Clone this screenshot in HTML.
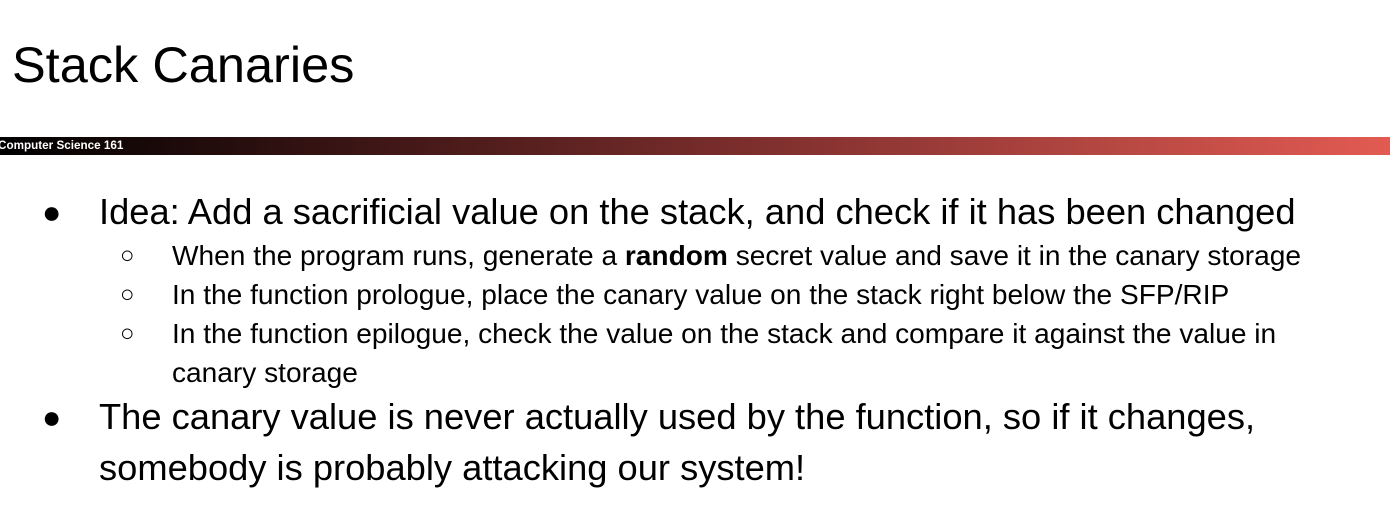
<!DOCTYPE html>
<html><head><meta charset="utf-8"><style>
body{margin:0;width:1391px;height:527px;background:#fff;position:relative;overflow:hidden;font-family:"Liberation Sans",Arial,sans-serif;color:#000}
.t{position:absolute;left:12px;top:38px;font-size:50.5px;line-height:54px}
.bar{position:absolute;left:0;top:137px;width:1390px;height:18px;background:linear-gradient(to right,#000 0%,#3a1414 25%,#8a3432 60%,#e25b52 100%)}
.bar span{position:absolute;left:-2px;top:2px;font-size:11.7px;font-weight:bold;color:#fff;line-height:14px}
.a{position:absolute;white-space:nowrap}
.l1{font-size:36.3px;line-height:36px}
.l2{font-size:28.1px;line-height:28px}
.b{font-size:32px}
.c{font-size:24px}
</style></head><body>
<div class="t">Stack Canaries</div>
<div class="bar"><span>Computer Science 161</span></div>
<div class="a l1 b" style="left:42px;top:194px">●</div>
<div class="a l1" style="left:99px;top:194px">Idea: Add a sacrificial value on the stack, and check if it has been changed</div>
<div class="a l2 c" style="left:120px;top:242px">○</div>
<div class="a l2" style="left:172px;top:242px">When the program runs, generate a <b>random</b> secret value and save it in the canary storage</div>
<div class="a l2 c" style="left:120px;top:281px">○</div>
<div class="a l2" style="left:172px;top:281px">In the function prologue, place the canary value on the stack right below the SFP/RIP</div>
<div class="a l2 c" style="left:120px;top:320px">○</div>
<div class="a l2" style="left:172px;top:320px">In the function epilogue, check the value on the stack and compare it against the value in</div>
<div class="a l2" style="left:172px;top:359px">canary storage</div>
<div class="a l1 b" style="left:42px;top:399px">●</div>
<div class="a l1" style="left:99px;top:399px">The canary value is never actually used by the function, so if it changes,</div>
<div class="a l1" style="left:99px;top:450px">somebody is probably attacking our system!</div>
</body></html>
